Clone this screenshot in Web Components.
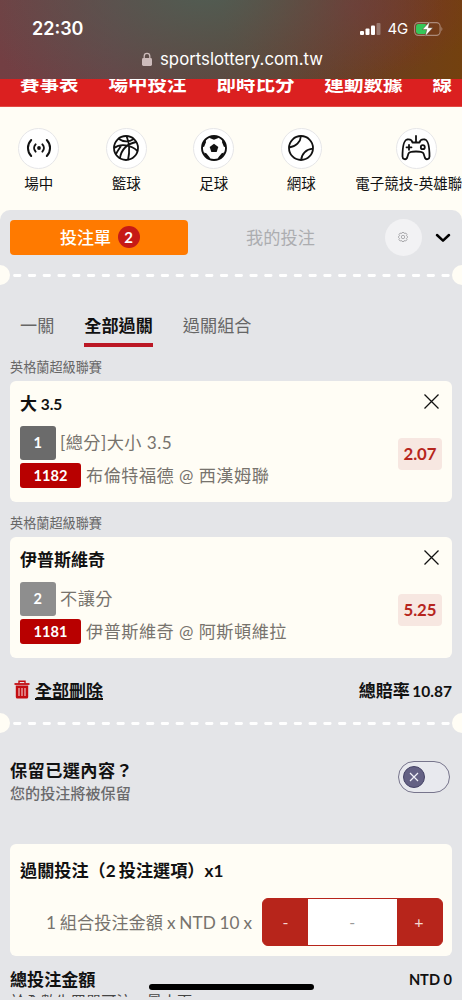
<!DOCTYPE html>
<html lang="zh-Hant">
<head>
<meta charset="utf-8">
<meta name="viewport" content="width=device-width">
<title>投注單</title>
<style>
html,body{margin:0;padding:0;height:1000px;overflow:hidden;background:#fffdf5}
body{font-family:Lato,"Noto Sans CJK TC",sans-serif;color:#111}
</style>
</head>
<body>
<lottery-app></lottery-app>
<script>
const define = (name, html) => customElements.define(name, class extends HTMLElement {
  constructor() {
    super();
    const t = document.createElement('template');
    t.innerHTML = '<style>*{box-sizing:border-box}:host{box-sizing:border-box;white-space:nowrap}</style>' +
      (typeof html === 'function' ? html(this) : html);
    this.attachShadow({mode: 'open'}).append(t.content.cloneNode(true));
  }
});

define('status-bar', `
<style>
:host{display:block;height:79px;color:#fff;font-family:Inter,"Liberation Sans",sans-serif;
background:radial-gradient(ellipse 240px 130px at 205px -10px,rgba(80,94,84,.95),rgba(80,94,84,0)),radial-gradient(ellipse 130px 75px at 350px 5px,rgba(125,48,44,.9),rgba(125,48,44,0)),linear-gradient(90deg,#733f43 0,#6a4246 25%,#604239 48%,#693d28 70%,#73410f 100%)}
.top{display:flex;align-items:center;height:47px;padding:10px 19px 0 32px}
.time{font-size:18px;font-weight:600;margin-top:-1px}
.sys{margin-left:auto;display:flex;align-items:center}
.net{font-size:15px;margin:0 6px 0 7px;letter-spacing:-.2px}
.url{display:flex;align-items:center;height:24px;padding-left:142px;font-size:16.8px}
.url svg{margin-right:8px}
svg{display:block}
</style>
<div class="top"><span class="time">22:30</span><div class="sys">
<svg width="21" height="12" viewBox="0 0 21 12" fill="#fff"><rect y="8" width="4" height="4" rx="1"/><rect x="5.5" y="5.5" width="4" height="6.5" rx="1"/><rect x="11" y="2.5" width="4" height="9.5" rx="1"/><rect x="16.5" width="4" height="12" rx="1" opacity=".3"/></svg>
<span class="net">4G</span>
<svg width="29" height="16" viewBox="0 0 29 16"><rect x=".6" y="1.6" width="25.5" height="12.8" rx="3.8" fill="none" stroke="#c3aba2" stroke-opacity=".7" stroke-width="1.1"/><path d="M27.5 5.7q1.6 2.3 0 4.6z" fill="#b79b8d"/><rect x="2" y="3" width="11" height="10" rx="2.4" fill="#35c759"/><path d="M15.8.4L8.4 8.6h4.4l-1.7 6.8 7.7-8.7h-4.5z" fill="#fff" stroke="#57402d" stroke-width=".5"/></svg>
</div></div>
<div class="url"><svg width="10" height="14" viewBox="0 0 10 14"><path d="M2.2 7V4.2a2.8 2.8 0 0 1 5.6 0V7" fill="none" stroke="#cdbcbb" stroke-width="1.3"/><rect y="6" width="10" height="8" rx="1.4" fill="#cdbcbb"/></svg><span>sportslottery.com.tw</span></div>
`);

define('main-nav', `
<style>
:host{display:flex;gap:30px;height:28px;overflow:hidden;background:#db2020;padding-left:20px;color:#fff;font-size:19.5px;font-weight:700;line-height:30px;border-bottom:1px solid #e24a43}
span{flex:none;margin-top:-10.5px}
</style>
<span>賽事表</span><span>場中投注</span><span>即時比分</span><span>運動數據</span><span>線</span>
`);

const sports = {
  live: '<g fill="none" stroke="#111" stroke-width="2" stroke-linecap="round"><path d="M10.6 10.4a5.2 5.2 0 0 0 0 7.2M17.4 10.4a5.2 5.2 0 0 1 0 7.2M6.200 6a11.500 11.500 0 0 0 0 16M21.800 6a11.500 11.500 0 0 1 0 16"/></g><circle cx="14" cy="14" r="1.9" fill="#111"/>',
  basket: '<g fill="none" stroke="#111" stroke-width="1.8"><circle cx="14" cy="14" r="12"/><path d="M14.500 2c3 7 3.500 15 1.500 24M2.100 14C8 9.500 19 10.500 25.500 17M6.500 4.800C11 8 17 8 22 5M8 24.200C9 17 13 10.500 24 8M4 20C5.500 17 7 15 9 12"/></g>',
  soccer: '<circle cx="14" cy="14" r="12" fill="none" stroke="#111" stroke-width="1.9"/><path d="M14 9.800l4.300 3.100-1.650 5h-5.300l-1.650-5z" fill="#111"/><path d="M9 3.800l5 2 5-2-3-1.500h-4zM2.200 12.500l1.800.500L6 8.200 5.500 5.500 3 9zM25.800 12.500l-1.800.500L22 8.200l.5-2.700L25 9zM3.800 18.500l2.500.800 3.500 4.200v2l-3.500-2zM24.200 18.500l-2.500.800-3.500 4.200v2l3.500-2z" fill="#111"/>',
  tennis: '<g fill="none" stroke="#111" stroke-width="1.8"><circle cx="14" cy="14" r="12"/><path d="M14 2C13.500 8 9 12.800 2.200 13.500M14.200 26C14.500 20 19 15.200 25.900 14.700"/></g>',
  pad: '<g fill="none" stroke="#111" stroke-width="1.8" stroke-linejoin="round" stroke-linecap="round"><path d="M14 2v6.500M10.500 8.500H17.500C18 6 19.500 5 23 5.500c3.500 1 4.500 9 4.500 17 0 3-3.500 3.500-4.500 1.500l-1.500-4.500C20.500 16.800 7.500 16.800 6.500 19.500L5 24C4 26 .500 25.500.500 22.500.500 14.500 1.500 6.500 5 5.500c3.500-.500 5 .500 5.500 3zM4.500 13.300h5M7 10.800v5"/><circle cx="20.800" cy="13.200" r="2"/></g>'
};
define('sport-item', el => `
<style>
:host{display:flex;flex-direction:column;align-items:center;flex:none;width:87.5px}
:host([wide]){width:122px;margin-left:10px}
.c{width:41px;height:41px;border:1px solid #e6e6e8;border-radius:50%;background:#fff;display:grid;place-items:center}
.t{font-size:14.5px;line-height:20px;margin-top:5.5px}
svg{overflow:visible}
</style>
<div class="c"><svg width="28" height="28" viewBox="0 0 28 28">${sports[el.getAttribute('icon')]}</svg></div><div class="t"><slot></slot></div>`);

define('sport-list', `
<style>:host{display:flex;height:103px;padding-top:20.5px;margin-left:-5px}</style><slot></slot>`);

define('tear-line', `
<style>
:host{display:flex;justify-content:space-between;align-items:center;height:21px;overflow:hidden}
i{width:20px;height:20px;border-radius:50%;background:#fffdf5;flex:none;margin:0 -10px}
svg{flex:none;width:437px;height:3px;margin-top:2px}
</style><i></i><svg><path d="M1.5 1.500H437" stroke="#fff" stroke-width="2.800" stroke-linecap="round" stroke-dasharray="5.500 9.270"/></svg><i></i>`);

define('slip-header', `
<style>
:host{display:flex;align-items:center;height:54px;padding:0 10px}
.on{width:177.5px;height:35px;border-radius:4px;background:#ff7a00;color:#fff;display:flex;align-items:center;justify-content:center;font-size:17px;font-weight:500;padding:0 0 1px 2px}
b{width:22px;height:22px;border-radius:50%;background:#c61a16;margin-left:6.5px;font-size:15px;line-height:22px;text-align:center}
.off{width:186px;text-align:center;font-size:17.2px;color:#acadb0;padding-bottom:2px}
.gear{width:37px;height:37px;border-radius:50%;background:#f2f2f4;margin-left:11px;display:grid;place-items:center}
.arrow{margin-left:13px;margin-top:1px}
</style>
<div class="on">投注單<b>2</b></div><div class="off">我的投注</div>
<div class="gear"><svg width="10" height="10" viewBox="0 0 10 10" fill="none" stroke="#9b9b9e"><path stroke-width=".800" stroke-linejoin="round" d="M4 .5h2l.4 1 1.600-.400 1 1.500-.700 1 1.200.800v1.200l-1.200.900.700 1-1.200 1.500-1.500-.500L6 9.500H4l-.400-1-1.500.500L.900 7.500l.800-1L.5 5.600V4.400l1.200-.800-.700-1L2 1.100l1.600.400z"/><circle cx="5" cy="5" r="1.700" stroke-width=".800"/></svg></div>
<svg class="arrow" width="16" height="10" viewBox="0 0 16 10" fill="none" stroke="#000" stroke-width="2.500" stroke-linecap="round" stroke-linejoin="round"><path d="M2 2l6 5.600L14 2"/></svg>`);

define('slip-tabs', `
<style>
:host{display:flex;gap:30px;padding:0 20px;height:45px;margin-top:27px;font-size:17.150px;line-height:28px;color:#666}
span{height:35px}
.a{font-weight:700;color:#111;border-bottom:4px solid #bb1724}
</style><span>一關</span><span class="a">全部過關</span><span>過關組合</span>`);

define('bet-card', el => `
<style>
:host{display:block;height:156px;padding:0 10px}
.lg{height:20px;font-size:13.150px;line-height:20px;color:#666}
.card{margin-top:4px;height:121px;border-radius:6px;background:#fffdf5;padding:11px 10px 0;display:grid;grid-template-columns:1fr auto}
.title{font-size:17px;font-weight:700;line-height:23px;height:33.500px;word-spacing:-.5px}
.row{display:flex;align-items:center;height:34px;color:#77736d;font-size:17.200px;letter-spacing:.450px}
.row+.row{height:26px;margin-top:3px}
.row>div{margin-top:-2.500px}
.n{width:35.500px;height:34px;border-radius:3px;background:${el.getAttribute('tone')};margin-right:4.500px}
.id{width:61px;height:25px;border-radius:3px;background:#b80000;margin-right:5px}
.n,.id{color:#fff;display:grid;place-items:center;font-weight:700;font-size:14.600px;letter-spacing:0}
.side{display:flex;flex-direction:column;align-items:flex-end}
.x{margin:2px 3px 0 0;display:block}
.odds{width:44px;height:32px;margin-top:28.500px;border-radius:4px;background:#f7e7e1;color:#b6251d;font-weight:700;font-size:16.800px;line-height:32px;text-align:center}
</style>
<div class="lg">英格蘭超級聯賽</div>
<div class="card"><div><div class="title"><slot name="title"></slot></div>
<div class="row"><span class="n"><slot name="n"></slot></span><div><slot name="market"></slot></div></div>
<div class="row"><span class="id"><slot name="id"></slot></span><div><slot name="match"></slot></div></div></div>
<div class="side"><svg class="x" width="15" height="15" viewBox="0 0 15 15" stroke="#111" stroke-width="1.300"><path d="M.5.500l14 14M14.500.500l-14 14"/></svg><div class="odds"><slot name="odds"></slot></div></div></div>`);

define('latin-text', `<style>:host{font-size:15.500px}</style><slot></slot>`);

define('slip-summary', `
<style>
:host{display:flex;align-items:center;height:43px;padding:0 10px 2px 14px;font-size:17px;font-weight:700}
u{text-decoration-thickness:1.500px;text-underline-offset:1px;margin-left:5px;margin-right:auto}
span{word-spacing:-1.500px}
u,span{margin-top:-1px}
</style>
<svg width="16" height="19" viewBox="0 0 16 19" fill="none" stroke="#c30d12"><path d="M.500 4h15" stroke-width="1.800"/><path d="M5 3.500V1.200h6v2.300" stroke-width="1.400"/><path d="M1.800 5.500h12.400V17q0 1.500-1.500 1.500H3.300Q1.800 18.500 1.800 17z" fill="#c30d12" stroke="none"/><path d="M5 8v8M8 8v8M11 8v8" stroke="#f2cfce" stroke-width="1.100"/></svg>
<u>全部刪除</u><span>總賠率 <latin-text>10.87</latin-text></span>`);

define('keep-option', `
<style>
:host{display:flex;justify-content:space-between;height:111px;padding:24px 12.500px 0 10px}
.t{font-size:17.200px;letter-spacing:.400px;font-weight:700;line-height:26px;margin-top:1px}
.s{font-size:15.100px;line-height:20px;margin-top:-1px;color:#6a6a6c;font-weight:500}
.sw{width:52px;height:32px;border:1.500px solid #77758c;border-radius:16px;margin-top:4px;padding:4px;background:#e8e9ee}
svg{display:block}
</style>
<div><div class="t">保留已選內容？</div><div class="s">您的投注將被保留</div></div>
<div class="sw"><svg width="22" height="22" viewBox="0 0 22 22"><circle cx="11" cy="11" r="10.500" fill="#646184" stroke="#454366"/><path d="M7 7l8 8M15 7l-8 8" stroke="#f0f0f8" stroke-width="1.200"/></svg></div>`);

define('amount-stepper', `
<style>
:host{display:grid;grid-template-columns:45px 1fr 45px;width:180.500px;height:48px;border:1px solid #b7251b;border-radius:6px;background:#b7251b;overflow:hidden;color:#f5d7d2;font-size:16px;text-align:center;line-height:46px}
.v{background:#fff;color:#999}
</style><span>-</span><span class="v">-</span><span>+</span>`);

define('stake-card', `
<style>
:host{display:block;height:112px;margin:0 10px;padding:14px 9.500px 0 10px;border-radius:6px;background:#fffdf5}
.t{font-size:17.150px;font-weight:700;line-height:26px;height:40px;word-spacing:-1px}
.r{display:flex;align-items:center;justify-content:flex-end;gap:10px;font-size:17.200px;color:#77736d;word-spacing:-.500px}
.r>span{margin-top:-2px}
</style><div class="t">過關投注（2 投注選項）x1</div><div class="r"><span>1 組合投注金額 x NTD 10 x</span><amount-stepper></amount-stepper></div>`);

define('total-row', `
<style>
:host{display:block;height:41px;overflow:hidden;padding:10px 10px 0;font-weight:700}
.r{display:flex;justify-content:space-between;align-items:center;height:25px;font-size:17.100px}
.m{font-size:14.600px;margin-top:1px}
.n{font-size:15.200px;line-height:20px;color:#444;font-weight:400}
</style><div class="r"><span>總投注金額</span><span class="m">NTD 0</span></div><div class="n">於全數先買單可注，最大百</div>`);

define('home-indicator', `
<style>:host{position:absolute;left:149px;top:984px;width:165px;height:6px;border-radius:3px;background:#000}</style>`);

define('bet-slip', `
<style>
:host{display:block;height:790px;border-radius:10px 10px 0 0;background:#e4e5e8}
</style>
<slip-header></slip-header><tear-line></tear-line><slip-tabs></slip-tabs>
<bet-card tone="#6b6b6b"><span slot="title">大 <latin-text>3.5</latin-text></span><span slot="n">1</span><span slot="market">[總分]大小 3.5</span><span slot="id">1182</span><span slot="match">布倫特福德 @ 西漢姆聯</span><span slot="odds">2.07</span></bet-card>
<bet-card tone="#8e8e8e"><span slot="title">伊普斯維奇</span><span slot="n">2</span><span slot="market">不讓分</span><span slot="id">1181</span><span slot="match">伊普斯維奇 @ 阿斯頓維拉</span><span slot="odds">5.25</span></bet-card>
<slip-summary></slip-summary><tear-line></tear-line><keep-option></keep-option><stake-card></stake-card><total-row></total-row>`);

define('lottery-app', `
<style>:host{display:block;position:relative;width:462px;height:1000px;overflow:hidden;background:#fffdf5}</style>
<status-bar></status-bar><main-nav></main-nav>
<sport-list><sport-item icon="live">場中</sport-item><sport-item icon="basket">籃球</sport-item><sport-item icon="soccer">足球</sport-item><sport-item icon="tennis">網球</sport-item><sport-item icon="pad" wide>電子競技-英雄聯盟</sport-item></sport-list>
<bet-slip></bet-slip><home-indicator></home-indicator>`);
</script>
</body>
</html>
